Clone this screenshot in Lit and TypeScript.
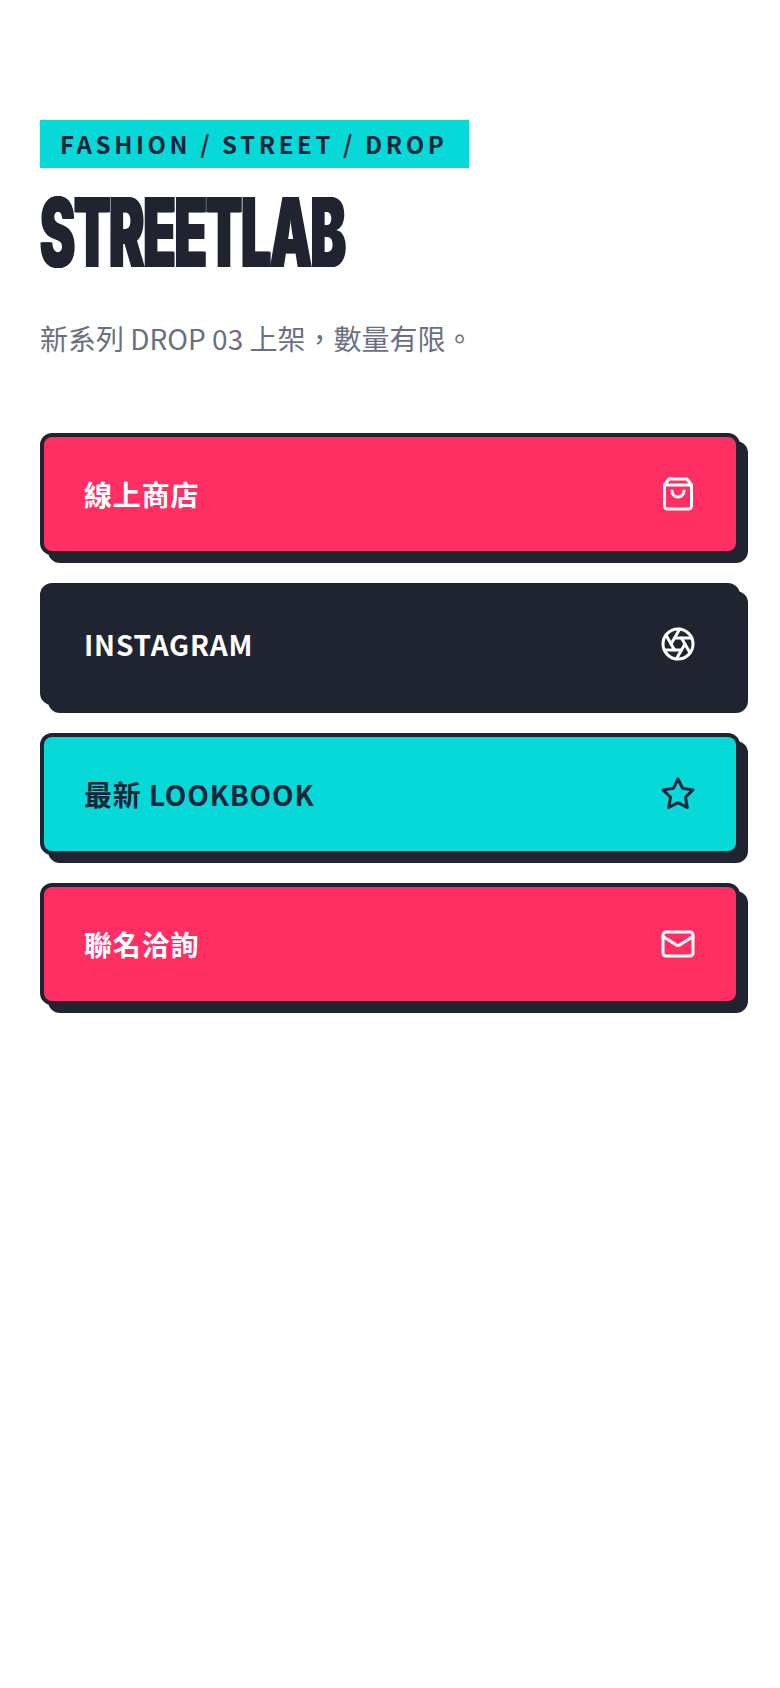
import { LitElement, html, svg, css } from "lit";
import { customElement } from "lit/decorators.js";

const icons = {
  bag: svg`<path d="M6 2 3 6v14a2 2 0 0 0 2 2h14a2 2 0 0 0 2-2V6l-3-4Z"/><path d="M3 6h18"/><path d="M16 10a4 4 0 0 1-8 0"/>`,
  aperture: svg`<circle cx="12" cy="12" r="10"/><path d="m14.31 8 5.74 9.94"/><path d="M9.69 8h11.48"/><path d="m7.38 12 5.74-9.94"/><path d="M9.69 16 3.95 6.06"/><path d="M14.31 16H2.83"/><path d="m16.62 12-5.74 9.94"/>`,
  star: svg`<polygon points="12 2 15.09 8.26 22 9.27 17 14.14 18.18 21.02 12 17.77 5.82 21.02 7 14.14 2 9.27 8.91 8.26 12 2"/>`,
  mail: svg`<rect x="2" y="4" width="20" height="16" rx="2"/><path d="m22 7-8.97 5.7a1.94 1.94 0 0 1-2.06 0L2 7"/>`,
};

const links = [
  { label: "線上商店", tone: "red", icon: icons.bag },
  { label: "INSTAGRAM", tone: "ink", icon: icons.aperture },
  { label: "最新 LOOKBOOK", tone: "cyan", icon: icons.star },
  { label: "聯名洽詢", tone: "red", icon: icons.mail },
];

@customElement("app-root")
export class AppRoot extends LitElement {
  static styles = css`
    :host {
      display: block;
      min-height: 1688px;
      background: #fff;
      font-family: "Noto Sans CJK TC", "Noto Sans", sans-serif;
      color: #1f2430;
    }
    .page {
      padding: 120px 40px 0;
      display: flex;
      flex-direction: column;
      align-items: flex-start;
    }
    .badge {
      background: #06d9d7;
      color: #14263a;
      font-size: 24px;
      line-height: 48px;
      height: 48px;
      font-weight: 700;
      letter-spacing: 3.6px;
      padding: 0 22px 0 20px;
    }
    .title {
      margin: 24px 0 0;
      height: 80px;
      font-family: "Inter", "Liberation Sans", sans-serif;
      font-weight: 900;
      font-size: 96px;
      line-height: 80px;
      letter-spacing: -2px;
      color: #1f2430;
      text-shadow: 2px 0 0 #1f2430, -2px 0 0 #1f2430;
      transform: scaleX(0.55);
      transform-origin: left center;
      white-space: nowrap;
    }
    .sub {
      margin: 44px 0 0;
      font-size: 28px;
      line-height: 44px;
      color: #6b7080;
    }
    .links {
      margin-top: 73px;
      width: 100%;
      display: flex;
      flex-direction: column;
      gap: 28px;
    }
    .link {
      box-sizing: border-box;
      width: 700px;
      height: 122px;
      display: flex;
      align-items: center;
      justify-content: space-between;
      padding: 0 40px;
      border: 4px solid #1f2430;
      border-radius: 12px;
      box-shadow: 8px 8px 0 #1f2430;
      font-size: 28px;
      font-weight: 700;
      letter-spacing: 0.84px;
      text-decoration: none;
    }
    .red { background: #ff2e63; color: #fff; }
    .ink { background: #1f2430; color: #fff; }
    .cyan { background: #06d9d7; color: #14263a; }
    svg {
      width: 36px;
      height: 36px;
      fill: none;
      stroke: currentColor;
      stroke-width: 2;
      stroke-linecap: round;
      stroke-linejoin: round;
    }
  `;

  render() {
    return html`<div class="page">
      <div class="badge">FASHION / STREET / DROP</div>
      <h1 class="title">STREETLAB</h1>
      <p class="sub">新系列 DROP 03 上架，數量有限。</p>
      <div class="links">
        ${links.map(
          (l) => html`<a class="link ${l.tone}" href="#"><span>${l.label}</span><svg viewBox="0 0 24 24">${l.icon}</svg></a>`
        )}
      </div>
    </div>`;
  }
}
